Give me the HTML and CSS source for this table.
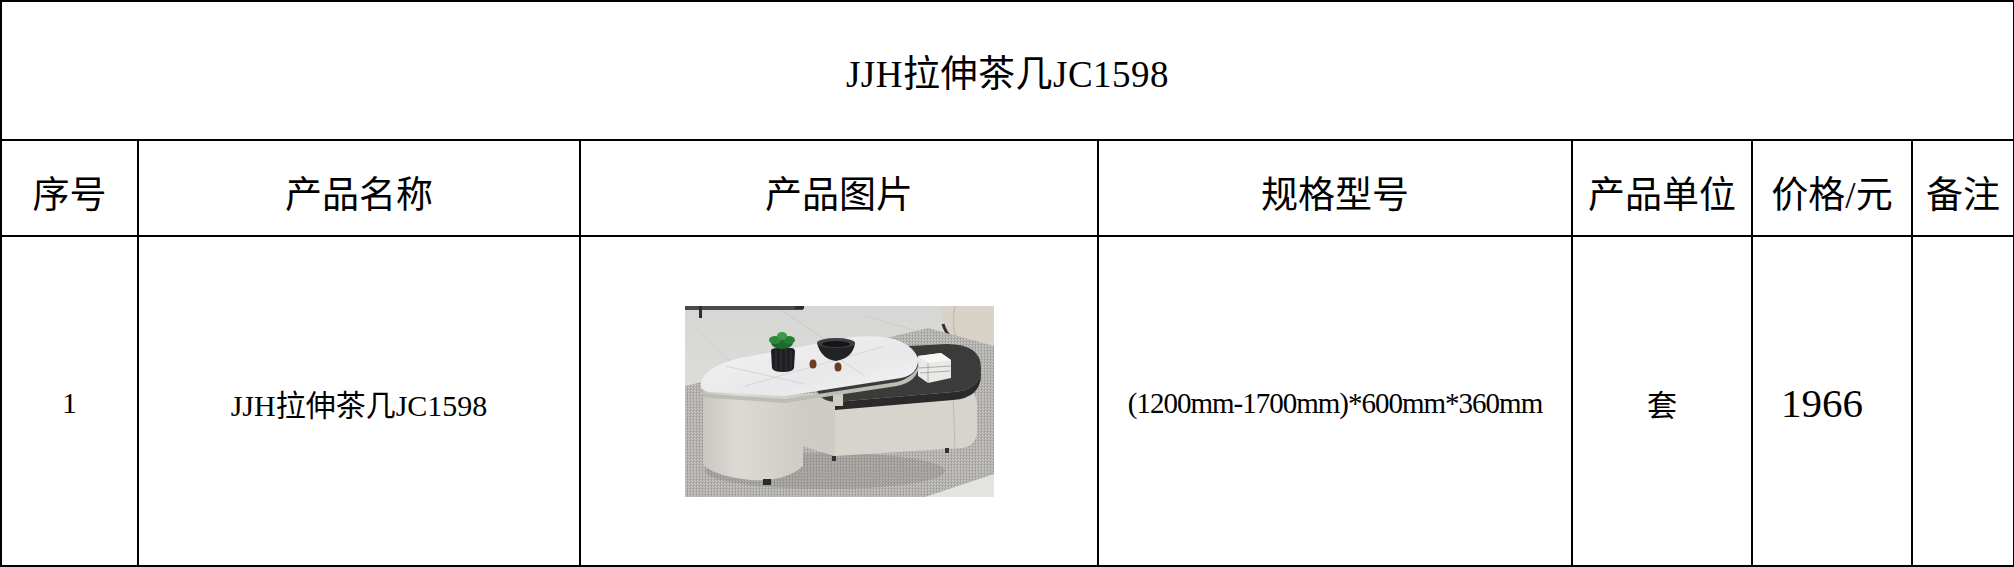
FILE: index.html
```html
<!DOCTYPE html>
<html lang="zh-CN">
<head>
<meta charset="utf-8">
<title>JJH拉伸茶几JC1598</title>
<link rel="stylesheet" href="styles.css">
</head>
<body>
<table class="sheet">
  <colgroup>
    <col class="c-no">
    <col class="c-name">
    <col class="c-pic">
    <col class="c-spec">
    <col class="c-unit">
    <col class="c-price">
    <col class="c-note">
  </colgroup>
  <tr class="row-title">
    <td colspan="7" class="title">JJH拉伸茶几JC1598</td>
  </tr>
  <tr class="row-head">
    <th>序号</th>
    <th>产品名称</th>
    <th>产品图片</th>
    <th>规格型号</th>
    <th>产品单位</th>
    <th>价格/元</th>
    <th>备注</th>
  </tr>
  <tr class="row-data">
    <td>1</td>
    <td>JJH拉伸茶几JC1598</td>
    <td class="pic">
      <svg class="photo" viewBox="0 0 309 191" width="309" height="191" aria-label="JJH拉伸茶几">
        <defs>
          <pattern id="rug" width="3" height="3" patternUnits="userSpaceOnUse">
            <rect width="3" height="3" fill="#b3b2ae"/>
            <rect x="0" y="0" width="1" height="1" fill="#cfcecb"/>
            <rect x="1" y="1" width="1" height="1" fill="#c4c3bf"/>
            <rect x="2" y="2" width="1" height="1" fill="#9a9995"/>
            <rect x="2" y="0" width="1" height="1" fill="#a4a39f"/>
          </pattern>
          <linearGradient id="floor" x1="0" y1="0" x2="0" y2="1">
            <stop offset="0" stop-color="#d6d6d4"/>
            <stop offset="1" stop-color="#e4e4e2"/>
          </linearGradient>
          <linearGradient id="cyl" x1="0" y1="0" x2="1" y2="0">
            <stop offset="0" stop-color="#c9c7c1"/>
            <stop offset="0.35" stop-color="#dcdad4"/>
            <stop offset="1" stop-color="#cfccc6"/>
          </linearGradient>
          <linearGradient id="marble" x1="0" y1="0" x2="1" y2="1">
            <stop offset="0" stop-color="#f4f4f4"/>
            <stop offset="0.6" stop-color="#e8e8ea"/>
            <stop offset="1" stop-color="#f6f6f6"/>
          </linearGradient>
        </defs>
        <rect width="309" height="191" fill="url(#floor)"/>
        <!-- floor tile seams -->
        <path d="M10 20 L60 70 M90 0 L150 40 M180 10 L250 30" stroke="#c8c8c6" stroke-width="0.8" fill="none"/>
        <!-- sofa at top left -->
        <rect x="0" y="0" width="118" height="4" fill="#4a4a4a"/>
        <rect x="14" y="0" width="3" height="12" fill="#2e2e2e"/>
        <rect x="110" y="0" width="9" height="3" fill="#2e2e2e"/>
        <!-- sofa at top right -->
        <path d="M256 0 L309 0 L309 52 L285 44 Q262 34 258 20 Z" fill="#d8d3c6"/>
        <path d="M258 18 Q262 34 285 42 L309 50" stroke="#2f2f2f" stroke-width="3" fill="none"/>
        <path d="M270 0 Q266 18 272 34" stroke="#c4bfb1" stroke-width="1.5" fill="none"/>
        <!-- rug -->
        <path d="M0 80 L243 22 L309 40 L309 168 L240 191 L0 191 Z" fill="url(#rug)"/>
        <!-- shadow under table -->
        <ellipse cx="140" cy="165" rx="120" ry="18" fill="#7d7c78" opacity="0.3"/>
        <!-- drawer box -->
        <path d="M118 88 L280 82 Q292 84 292 100 L292 128 Q290 140 278 142 L150 150 L118 140 Z" fill="#d7d4ce"/>
        <path d="M118 88 L150 94 L150 150 L118 140 Z" fill="#cfccc5"/>
        <path d="M268 86 L270 144" stroke="#bdbab3" stroke-width="1"/>
        <rect x="147" y="150" width="4" height="5" fill="#333"/>
        <rect x="260" y="142" width="4" height="5" fill="#333"/>
        <!-- black tray -->
        <path d="M150 44 L262 38 Q296 38 296 62 Q296 84 268 86 L150 96 Q128 94 132 74 Z" fill="#3b3b3c"/>
        <path d="M150 96 L268 86 Q296 84 296 62 L296 68 Q296 92 268 94 L150 104 Z" fill="#2a2a2b"/>
        <!-- books on tray -->
        <path d="M233 50 L256 47 L266 54 L266 72 L243 77 L233 70 Z" fill="#e9e9e7"/>
        <path d="M233 50 L256 47 L266 54 L243 57 Z" fill="#f7f7f5"/>
        <path d="M243 57 L243 77 M234 62 L266 60 M235 67 L265 65" stroke="#9d9d9b" stroke-width="0.8"/>
        <!-- left cylinder base -->
        <path d="M18 82 L118 88 L118 160 Q100 176 66 174 Q28 170 18 158 Z" fill="url(#cyl)"/>
        <rect x="78" y="173" width="8" height="6" fill="#2b2b2b"/>
        <!-- small column between top and tray -->
        <rect x="148" y="86" width="10" height="14" fill="#d0cdc6"/>
        <!-- tabletop edge -->
        <path d="M16 78 Q14 86 24 88 L100 93 L212 76 Q232 70 234 56 L234 60 Q232 76 212 80 L100 97 L24 92 Q12 90 16 78 Z" fill="#bfbcb5"/>
        <!-- marble tabletop -->
        <path d="M16 77 Q20 60 55 52 L167 31 Q222 26 233 52 Q234 68 216 72 L100 90 L24 86 Q14 84 16 77 Z" fill="url(#marble)"/>
        <path d="M60 80 L200 40 M40 60 L120 78 M150 50 L180 70" stroke="#c9c9cd" stroke-width="0.6" fill="none"/>
        <!-- plant pot -->
        <path d="M86 45 Q86 42 92 42 L106 42 Q110 42 110 46 L109 62 Q108 66 98 66 Q88 66 87 62 Z" fill="#1d1f22"/>
        <path d="M91 44 L91 64 M96 43 L96 65 M101 43 L101 65 M106 44 L106 63" stroke="#3b3e42" stroke-width="0.8"/>
        <!-- plant leaves -->
        <ellipse cx="97" cy="37" rx="11" ry="6" fill="#1f6a2a"/>
        <ellipse cx="90" cy="34" rx="6" ry="4" fill="#2e8a3a"/>
        <ellipse cx="104" cy="34" rx="6" ry="4" fill="#2a7d34"/>
        <ellipse cx="97" cy="30" rx="5" ry="4" fill="#3a9a45"/>
        <!-- bowl -->
        <path d="M132 37 Q150 30 170 37 Q168 52 151 55 Q136 53 132 37 Z" fill="#222326"/>
        <ellipse cx="151" cy="37" rx="19" ry="5" fill="#3e3f43"/>
        <ellipse cx="151" cy="38" rx="14" ry="3" fill="#151517"/>
        <!-- pine cones -->
        <ellipse cx="128" cy="58" rx="3.5" ry="4.5" fill="#6e3b22"/>
        <ellipse cx="153" cy="61" rx="3.5" ry="4.5" fill="#6e3b22"/>
      </svg>
    </td>
    <td class="spec">(1200mm-1700mm)*600mm*360mm</td>
    <td>套</td>
    <td class="price">1966</td>
    <td></td>
  </tr>
</table>
</body>
</html>
```

FILE: styles.css
```css
html, body {
  margin: 0;
  padding: 0;
  background: #ffffff;
}

body {
  font-family: "Liberation Serif", "Noto Sans CJK SC", serif;
  color: #000000;
}

.sheet {
  border-collapse: collapse;
  table-layout: fixed;
  width: 2013px;
}

.sheet td,
.sheet th {
  border: 2px solid #000000;
  padding: 0;
  text-align: center;
  vertical-align: middle;
  font-weight: normal;
}

.c-no { width: 137px; }
.c-name { width: 442px; }
.c-pic { width: 518px; }
.c-spec { width: 474px; }
.c-unit { width: 180px; }
.c-price { width: 160px; }
.c-note { width: 102px; }

.row-title { height: 139px; }
.row-head { height: 96px; }
.row-data { height: 330px; }

.title {
  font-size: 37px;
  letter-spacing: 0.5px;
  padding-top: 8px;
}

.row-head th {
  font-size: 37px;
  padding-top: 8px;
}

.row-data td {
  font-size: 30px;
  padding-top: 4px;
}

.row-data .spec {
  font-size: 29px;
  letter-spacing: -1px;
}

.row-data .price {
  font-size: 41px;
  padding-right: 20px;
}

.row-data .pic {
  padding-top: 0;
  line-height: 0;
}

.photo {
  display: block;
  margin: 0 auto;
}
```
